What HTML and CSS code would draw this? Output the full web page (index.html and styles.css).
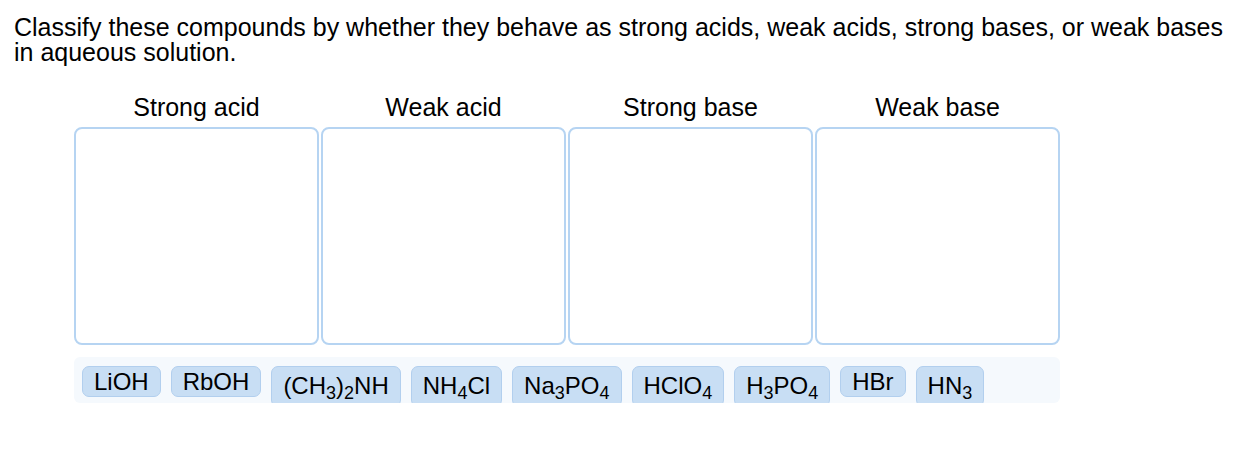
FILE: index.html
```html
<!DOCTYPE html>
<html lang="en">
<head>
<meta charset="utf-8">
<title>Classify compounds</title>
<link rel="stylesheet" href="styles.css">
</head>
<body>
<main class="page">
  <p class="prompt">Classify these compounds by whether they behave as strong acids, weak acids, strong bases, or weak bases in aqueous solution.</p>
  <section class="board">
    <div class="labels">
      <div class="label">Strong acid</div>
      <div class="label">Weak acid</div>
      <div class="label">Strong base</div>
      <div class="label">Weak base</div>
    </div>
    <div class="bins">
      <div class="bin"></div>
      <div class="bin"></div>
      <div class="bin"></div>
      <div class="bin"></div>
    </div>
    <div class="tray">
      <span class="chip">LiOH</span>
      <span class="chip">RbOH</span>
      <span class="chip chip-sub">(CH<sub>3</sub>)<sub>2</sub>NH</span>
      <span class="chip chip-sub">NH<sub>4</sub>Cl</span>
      <span class="chip chip-sub">Na<sub>3</sub>PO<sub>4</sub></span>
      <span class="chip chip-sub">HClO<sub>4</sub></span>
      <span class="chip chip-sub">H<sub>3</sub>PO<sub>4</sub></span>
      <span class="chip">HBr</span>
      <span class="chip chip-sub">HN<sub>3</sub></span>
    </div>
  </section>
</main>
</body>
</html>
```
FILE: styles.css
```css
html, body {
  margin: 0;
  background: #ffffff;
}

body {
  font-family: "Liberation Sans", Arial, Helvetica, sans-serif;
  color: #000000;
}

.page {
  padding: 15px 0 0 14px;
}

.prompt {
  margin: 0;
  font-size: 25px;
  line-height: 25px;
  width: 1230px;
}

.board {
  margin: 27px 0 0 60px;
  width: 986px;
}

.labels,
.bins {
  display: grid;
  grid-template-columns: repeat(4, 245px);
  column-gap: 2px;
}

.label {
  text-align: center;
  font-size: 25px;
  line-height: 30px;
}

.bins {
  margin-top: 5px;
}

.bin {
  height: 214px;
  border: 2px solid #b6d4f2;
  border-radius: 8px;
}

.tray {
  margin-top: 12px;
  height: 46px;
  padding: 9px 8px 0;
  box-sizing: border-box;
  background: #f5f9fd;
  border-radius: 6px;
  display: flex;
  align-items: flex-start;
  gap: 10px;
}

.chip {
  display: inline-block;
  padding: 0 11px;
  font-size: 24px;
  line-height: 29px;
  background: #c8def4;
  border: 1px solid #b2cfee;
  border-radius: 7px;
  white-space: nowrap;
}

.chip-sub {
  padding-top: 4px;
  padding-bottom: 6px;
}

.chip sub {
  font-size: 18px;
  line-height: 0;
  vertical-align: -5px;
}
```
